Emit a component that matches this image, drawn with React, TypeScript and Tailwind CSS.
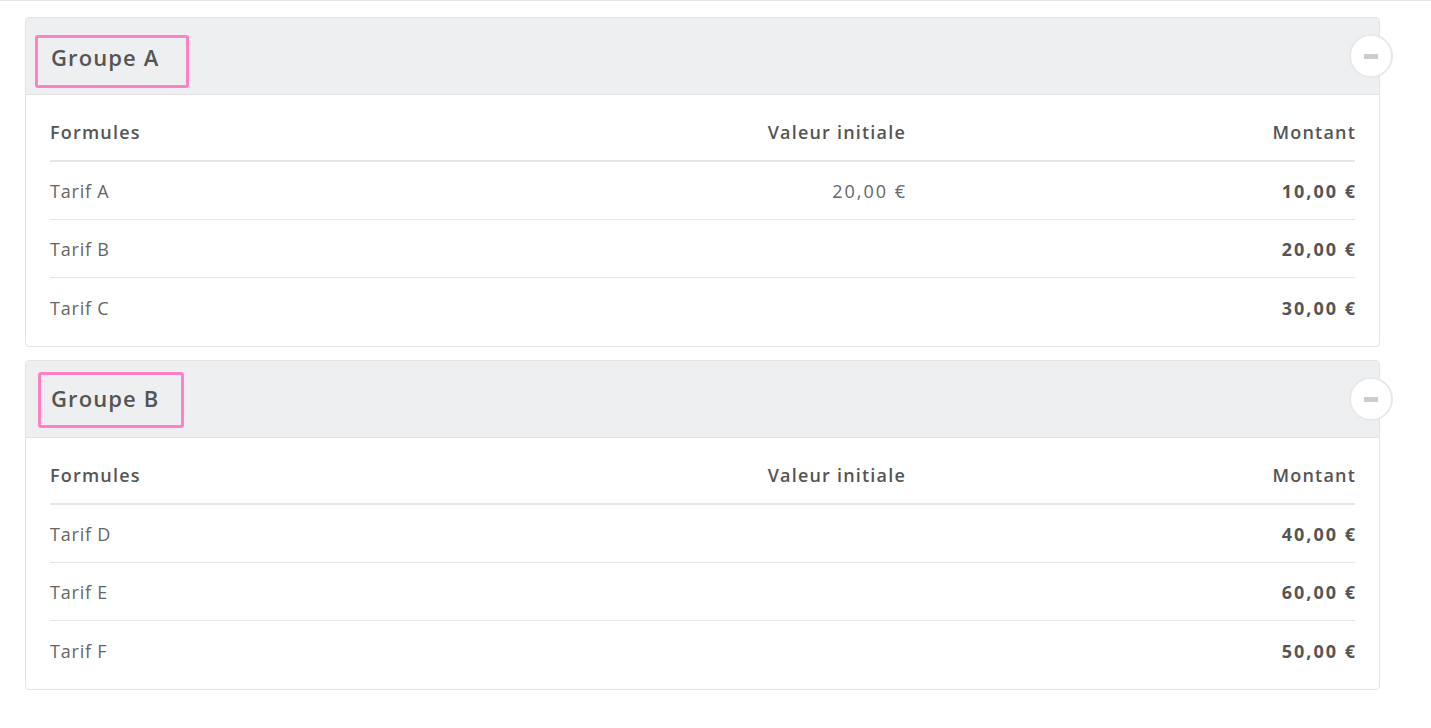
const groups = [
  {
    name: "Groupe A",
    box: "ml-[9px] h-[53px] w-[154px] pl-[13px] pb-[9px]",
    pad: "pt-[17px]",
    rows: [
      { label: "Tarif A", initial: "20,00 €", amount: "10,00 €" },
      { label: "Tarif B", initial: "", amount: "20,00 €" },
      { label: "Tarif C", initial: "", amount: "30,00 €" },
    ],
  },
  {
    name: "Groupe B",
    box: "ml-[12px] h-[56px] w-[146px] pl-[10px] pb-[4px]",
    pad: "pt-[11px]",
    rows: [
      { label: "Tarif D", initial: "", amount: "40,00 €" },
      { label: "Tarif E", initial: "", amount: "60,00 €" },
      { label: "Tarif F", initial: "", amount: "50,00 €" },
    ],
  },
];

function Group({ group }: { group: (typeof groups)[number] }) {
  return (
    <div className="relative rounded-[4px] border border-[#e3e3e3]">
      <div className={`h-[77px] rounded-t-[4px] border-b border-[#e3e3e3] bg-[#eeeff1] ${group.pad}`}>
        <div className={`flex items-center rounded-[3px] border-[3px] border-[#ff80c4] ${group.box}`}>
          <h2 className="text-[22px] font-semibold tracking-[1.1px] text-[#555555]">{group.name}</h2>
        </div>
      </div>
      <button className="absolute right-[-14px] top-[16px] flex h-[44px] w-[44px] items-center justify-center rounded-full border-2 border-[#e8e8e8] bg-white">
        <span className="h-[5px] w-[14px] bg-[#cccccc]" />
      </button>
      <div className="px-[24px] pb-[10px] pt-[10px]">
        <div className="grid h-[57px] grid-cols-3 items-center border-b-2 border-[#e6e6e6] text-[18px] font-semibold tracking-[1.2px] text-[#555555]">
          <div>Formules</div>
          <div className="mr-[-1px] pr-[15px] text-right">Valeur initiale</div>
          <div className="mr-[-1px] text-right">Montant</div>
        </div>
        {group.rows.map((row, i) => (
          <div
            key={row.label}
            className={`grid h-[58px] grid-cols-3 items-center pt-[2px] text-[18px] ${
              i < group.rows.length - 1 ? "border-b border-[#e6e6e6]" : ""
            }`}
          >
            <div className="tracking-[0.8px] text-[#666666]">{row.label}</div>
            <div className="mr-[-2px] pr-[15px] text-right tracking-[2px] text-[#666666]">{row.initial}</div>
            <div className="mr-[-2px] text-right font-bold tracking-[2px] text-[#555555]">{row.amount}</div>
          </div>
        ))}
      </div>
    </div>
  );
}

export default function App() {
  return (
    <div
      className="min-h-[728px] border-t border-[#e5e5e5] bg-white"
      style={{ fontFamily: "'Open Sans', sans-serif" }}
    >
      <div className="flex w-[1380px] flex-col gap-[13px] pl-[25px] pt-[16px]">
        {groups.map((g) => (
          <Group key={g.name} group={g} />
        ))}
      </div>
    </div>
  );
}
